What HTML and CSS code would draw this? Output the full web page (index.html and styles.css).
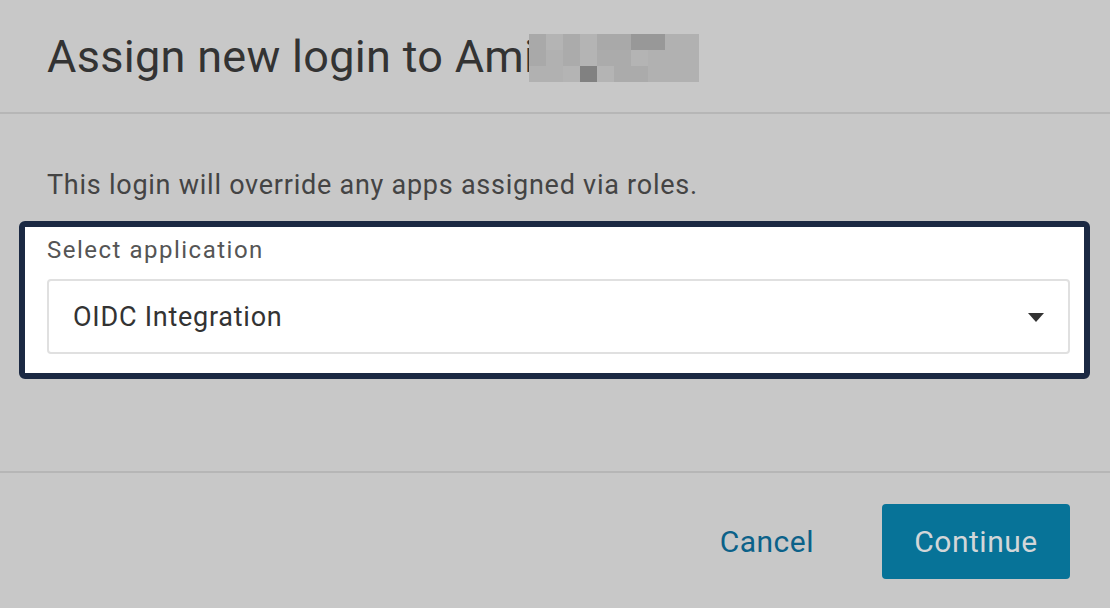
FILE: index.html
```html
<!DOCTYPE html>
<html>
<head>
<meta charset="utf-8">
<link rel="stylesheet" href="styles.css">
</head>
<body>
<div class="dialog">
  <header class="dlg-header">
    <h1 class="title">Assign new login to Ami<span class="redact"><i class="c1"></i><i class="c2"></i><i class="c3"></i><i class="c2"></i><i class="c1"></i><i class="c1"></i><i class="c4"></i><i class="c4"></i><i class="c5"></i><i class="c5"></i><i class="c1"></i><i class="c5"></i><i class="c3"></i><i class="c2"></i><i class="c3"></i><i class="c3"></i><i class="c2"></i><i class="c5"></i><i class="c5"></i><i class="c5"></i><i class="c5"></i><i class="c5"></i><i class="c2"></i><i class="c6"></i><i class="c2"></i><i class="c3"></i><i class="c3"></i><i class="c5"></i><i class="c5"></i><i class="c5"></i></span></h1>
  </header>
  <section class="dlg-body">
    <p class="note">This login will override any apps assigned via roles.</p>
    <div class="focus-box">
      <label class="field-label">Select application</label>
      <div class="select">
        <span class="select-value">OIDC Integration</span>
        <svg class="caret" width="16" height="10" viewBox="0 0 16 10"><path d="M0 0 H16 L8 9 Z" fill="#333"/></svg>
      </div>
    </div>
  </section>
  <footer class="dlg-footer">
    <button class="btn-link">Cancel</button>
    <button class="btn-primary">Continue</button>
  </footer>
</div>
</body>
</html>
```

FILE: styles.css
```css
html, body {
  margin: 0;
  padding: 0;
  background: #c8c8c8;
}
body {
  font-family: Roboto, "Liberation Sans", sans-serif;
  width: 1110px;
  height: 608px;
  overflow: hidden;
}
.dialog {
  display: flex;
  flex-direction: column;
}
.dlg-header {
  border-bottom: 2px solid #b6b6b6;
  box-sizing: border-box;
  height: 114px;
  padding: 29px 0 0 47px;
}
.title {
  margin: 0;
  font-size: 45px;
  font-weight: 400;
  letter-spacing: 0.3px;
  color: #333;
  line-height: 56px;
  display: flex;
  align-items: center;
}
.redact {
  display: grid;
  grid-template-columns: repeat(10, 17px);
  grid-template-rows: repeat(3, 16px);
  margin-left: -6px;
  margin-top: 2px;
}
.redact i { display: block; }
.c1 { background: #a9a9a9; }
.c2 { background: #b4b4b4; }
.c3 { background: #ababab; }
.c4 { background: #989898; }
.c5 { background: #b1b1b1; }
.c6 { background: #818181; }

.dlg-body {
  height: 359px;
  box-sizing: border-box;
  border-bottom: 2px solid #b6b6b6;
  padding: 0 20px 0 19px;
}
.note {
  margin: 0;
  padding: 55px 0 0 28px;
  font-size: 27px;
  letter-spacing: 0.75px;
  line-height: 32px;
  color: #444;
  height: 107px;
  box-sizing: border-box;
}
.focus-box {
  width: 1071px;
  height: 158px;
  box-sizing: border-box;
  border: 6px solid #1b2943;
  border-radius: 6px;
  background: #fff;
  padding: 4px 14px 0 22px;
  display: flex;
  flex-direction: column;
}
.field-label {
  font-size: 24px;
  letter-spacing: 1.5px;
  line-height: 38px;
  color: #555;
}
.select {
  margin-top: 10px;
  height: 75px;
  box-sizing: border-box;
  border: 2px solid #e0e0e0;
  border-radius: 4px;
  display: flex;
  align-items: center;
  justify-content: space-between;
  padding: 0 24px 0 24px;
}
.select-value {
  font-size: 27px;
  letter-spacing: 0.75px;
  color: #333;
}
.caret { margin-top: 2px; }

.dlg-footer {
  display: flex;
  justify-content: flex-end;
  align-items: center;
  padding: 31px 40px 0 0;
  gap: 36px;
}
.btn-link, .btn-primary {
  font-family: Roboto, "Liberation Sans", sans-serif;
  font-size: 30px;
  letter-spacing: 0.5px;
  border: none;
  cursor: pointer;
}
.btn-link {
  background: none;
  color: #0b6189;
  padding: 0 32px;
}
.btn-primary {
  background: #077398;
  color: #d2d6d8;
  width: 188px;
  height: 75px;
  border-radius: 4px;
}
```
